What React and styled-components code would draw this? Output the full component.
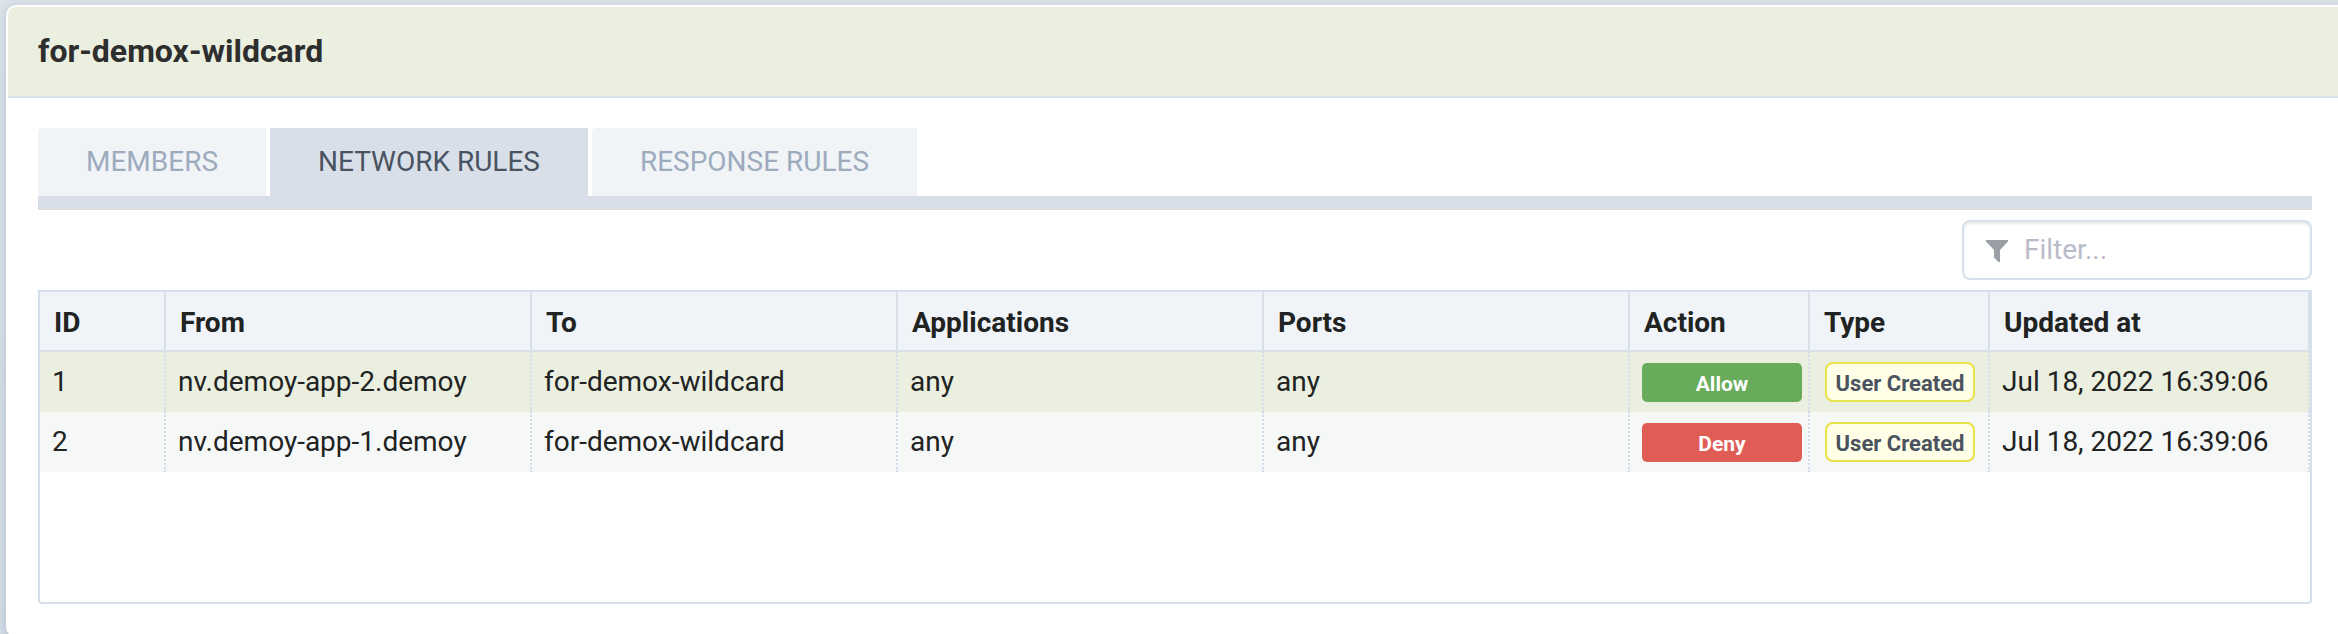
import React from "react";
import styled, { createGlobalStyle } from "styled-components";

const GlobalStyle = createGlobalStyle`
  * { box-sizing: border-box; }
  body {
    margin: 0;
    overflow: hidden;
    background: #d6dee7;
    font-family: Roboto, "Liberation Sans", sans-serif;
    font-size: 28px;
    color: #212322;
  }
`;

const Page = styled.main`
  height: 634px;
  padding: 5px 0 0 6px;
  overflow: hidden;
  background: linear-gradient(#dbe2ea, #d3dce5);
`;

const Panel = styled.section`
  width: 2360px;
  height: 632px;
  border: 2px solid #fff;
  border-radius: 10px;
  background: #fff;
  box-shadow: 0 2px 10px rgba(60, 80, 110, 0.22);
`;

const PanelHeader = styled.header`
  display: flex;
  align-items: center;
  height: 91px;
  padding: 0 30px 2px;
  border-bottom: 2px solid #d8e0e9;
  border-radius: 8px 8px 0 0;
  background: #ebefe0;
`;

const Title = styled.h1`
  margin: 0;
  font-size: 32px;
  font-weight: 700;
  line-height: 40px;
  color: #2d2e2d;
`;

const PanelBody = styled.div`
  width: 2334px;
  padding: 30px 30px 0;
`;

const TabBar = styled.nav`
  display: flex;
  gap: 4px;
  height: 82px;
  border-bottom: 2px solid #dddddd;
  background: linear-gradient(#d8dfe9, #d8dfe9) bottom / 100% 12px no-repeat;
`;

const Tab = styled.button`
  width: ${(p) => p.$width}px;
  height: 68px;
  padding: 0;
  border: 0;
  border-radius: ${(p) => (p.$active ? "0" : "4px 0 0 0")};
  background: ${(p) => (p.$active ? "#d8dfe9" : "#f0f4f7")};
  color: ${(p) => (p.$active ? "#4a5361" : "#9dabbd")};
  font: inherit;
  line-height: 66px;
`;

const Toolbar = styled.div`
  display: flex;
  justify-content: flex-end;
  padding: 10px 0;
`;

const FilterBox = styled.label`
  display: flex;
  align-items: center;
  gap: 16px;
  width: 350px;
  height: 60px;
  padding: 0 22px 2px;
  border: 2px solid #d5e0ea;
  border-radius: 8px;
  box-shadow: inset 0 2px 3px rgba(0, 0, 0, 0.09);
  color: #b9bbc9;
`;

const FunnelIcon = styled.svg`
  display: block;
  width: 22px;
  height: 22px;
  margin-top: 4px;
  fill: #9a9fa5;
`;

const Grid = styled.div`
  height: 314px;
  border: 2px solid #d5e0ea;
  border-radius: 0 0 4px 4px;
`;

const Row = styled.div`
  display: grid;
  grid-template-columns: 126px repeat(4, 366px) 180px 180px 320px;
  height: 60px;
  background: ${(p) => p.$background};
`;

const HeaderRow = styled(Row)`
  border-bottom: 2px solid #d8e0e9;
  font-weight: 700;
`;

const HeaderCell = styled.div`
  display: flex;
  align-items: center;
  padding: 2px 0 0 14px;
  border-right: 2px solid #d8e0e9;
`;

const Cell = styled.div`
  display: flex;
  align-items: center;
  padding: 0 0 2px 12px;
  border-right: 2px dotted #d5dee8;
  white-space: nowrap;
`;

const ActionBadge = styled.span`
  width: 160px;
  height: 39px;
  margin-top: 3px;
  border-radius: 5px;
  background: ${(p) => (p.$allow ? "#67ab5b" : "#df5d55")};
  color: #fff;
  font-size: 21px;
  font-weight: 700;
  line-height: 43px;
  text-align: center;
`;

const TypeBadge = styled.span`
  width: 150px;
  height: 40px;
  margin: 2px 0 0 3px;
  border: 2px solid #e8e24b;
  border-radius: 8px;
  background: #fffee6;
  color: #4a535f;
  font-size: 22px;
  font-weight: 700;
  line-height: 40px;
  text-align: center;
`;

const tabs = [
  { label: "MEMBERS", width: 228 },
  { label: "NETWORK RULES", width: 318, active: true },
  { label: "RESPONSE RULES", width: 325 },
];

const columns = ["ID", "From", "To", "Applications", "Ports", "Action", "Type", "Updated at"];

const rules = [
  { id: 1, from: "nv.demoy-app-2.demoy", action: "Allow", background: "#ebefe0" },
  { id: 2, from: "nv.demoy-app-1.demoy", action: "Deny", background: "#f6f8f8" },
];

export default function App() {
  return (
    <Page>
      <GlobalStyle />
      <Panel>
        <PanelHeader>
          <Title>for-demox-wildcard</Title>
        </PanelHeader>
        <PanelBody>
          <TabBar>
            {tabs.map((t) => (
              <Tab key={t.label} $width={t.width} $active={t.active}>
                {t.label}
              </Tab>
            ))}
          </TabBar>
          <Toolbar>
            <FilterBox>
              <FunnelIcon viewBox="0 0 22 22">
                <path d="M0 0H22V1.5L14 10V22H12.5L8 17.5V10L0 1.5Z" />
              </FunnelIcon>
              Filter...
            </FilterBox>
          </Toolbar>
          <Grid>
            <HeaderRow $background="#f0f4f8">
              {columns.map((c) => (
                <HeaderCell key={c}>{c}</HeaderCell>
              ))}
            </HeaderRow>
            {rules.map((r) => (
              <Row key={r.id} $background={r.background}>
                <Cell>{r.id}</Cell>
                <Cell>{r.from}</Cell>
                <Cell>for-demox-wildcard</Cell>
                <Cell>any</Cell>
                <Cell>any</Cell>
                <Cell>
                  <ActionBadge $allow={r.action === "Allow"}>{r.action}</ActionBadge>
                </Cell>
                <Cell>
                  <TypeBadge>User Created</TypeBadge>
                </Cell>
                <Cell>Jul 18, 2022 16:39:06</Cell>
              </Row>
            ))}
          </Grid>
        </PanelBody>
      </Panel>
    </Page>
  );
}
